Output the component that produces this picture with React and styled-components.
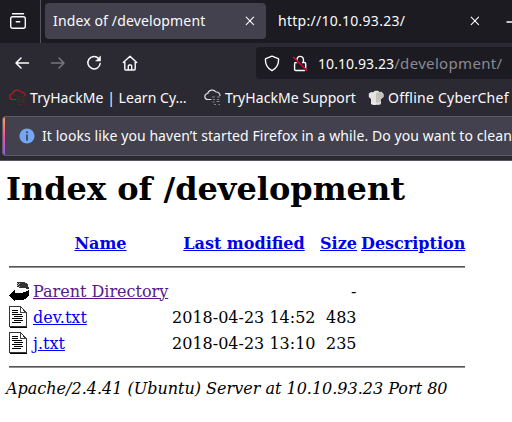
import React from "react";
import styled, { createGlobalStyle } from "styled-components";

const Global = createGlobalStyle`
  * { box-sizing: border-box; }
  html, body { margin: 0; background: #fff; overflow: hidden; }
  svg { display: block; flex: none; }
`;

const Browser = styled.div`
  width: 512px;
  height: 422px;
  overflow: hidden;
  font-family: "Noto Sans", "Open Sans", sans-serif;
  font-size: 14px;
  color: #fbfbfe;
  background: #fff;
`;

const Text = styled.span`
  white-space: pre;
  font-size: ${(p) => p.$size || 14}px;
  letter-spacing: ${(p) => p.$track || 0}px;
  color: ${(p) => p.$color || "inherit"};
  line-height: 20px;
`;

const TabStrip = styled.div`
  display: flex;
  align-items: center;
  height: 43px;
  background: #1c1b22;
`;

const ViewButton = styled.div`
  width: 41px;
  height: 43px;
  padding: 12px 0 0 9px;
  border-right: 1px solid #55545e;
  flex: none;
`;

const Tab = styled.div`
  display: flex;
  flex: none;
  align-items: center;
  justify-content: space-between;
  width: ${(p) => p.$width}px;
  height: 36px;
  margin: 0 0 1px 4px;
  padding: 0 11px 0 8px;
  border-radius: 4px;
  background: ${(p) => (p.$active ? "#42414d" : "transparent")};
`;

const NewTab = styled.div`
  margin-left: 15px;
`;

const Toolbar = styled.div`
  display: flex;
  align-items: center;
  height: 38px;
  padding-left: 14px;
  background: #2b2a33;
`;

const NavButtons = styled.div`
  display: flex;
  gap: 20px;
  width: 242px;
  padding-top: 2px;
  flex: none;
`;

const AddressBar = styled.div`
  display: flex;
  align-items: center;
  width: 270px;
  height: 32px;
  margin-top: 2px;
  padding-left: 8px;
  border-radius: 4px 0 0 4px;
  background: #1c1b22;
  flex: none;
`;

const UrlText = styled.div`
  display: flex;
  align-items: baseline;
  width: 190px;
  margin-left: 10px;
`;

const LockSlot = styled.div`
  margin-left: 12px;
`;

const Bookmarks = styled.div`
  display: flex;
  align-items: center;
  height: 35px;
  padding: 0 0 2px 9px;
  background: #2b2a33;
`;

const Bookmark = styled.div`
  display: flex;
  align-items: center;
  gap: 4px;
  width: ${(p) => p.$width}px;
  flex: none;
`;

const NoticeArea = styled.div`
  height: 45px;
  padding-left: 2px;
  border-bottom: 1px solid #55545e;
  background: #2b2a33;
`;

const Notice = styled.div`
  display: flex;
  height: 40px;
  border: 1px solid #5b5a65;
  border-width: 1px 0 1px 1px;
  border-radius: 4px 0 0 4px;
  background: #42414d;
  overflow: hidden;
  align-items: center;
`;

const Stripe = styled.div`
  width: 2px;
  height: 38px;
  background: linear-gradient(#ffa43a, #ff4aa2 50%, #9059ff);
`;

const NoticeBody = styled.div`
  display: flex;
  gap: 7px;
  align-items: center;
  padding: 0 0 0 14px;
`;

const Page = styled.main`
  height: 261px;
  padding: 9px 6px 0;
  background: #fff;
  color: #000;
  font: 16px/19px "DejaVu Serif", serif;
`;

const Heading = styled.h1`
  margin: 0;
  height: 59px;
  font-size: 32px;
  line-height: 38px;
  white-space: nowrap;
`;

const Listing = styled.table`
  border-spacing: 2px;
  border-collapse: separate;
  table-layout: fixed;
  width: 462px;
`;

const Cell = styled.td`
  height: 24px;
  padding: 1px;
  text-align: ${(p) => p.$align || "left"};
  white-space: nowrap;
`;

const DataCell = styled(Cell)`
  padding-right: 1.5px;
`;

const HeadCell = styled(Cell).attrs({ as: "th" })``;

const RuleCell = styled.td`
  padding: 1px;
`;

const Rule = styled.hr`
  margin: 8px 0;
  height: 2px;
  border: 0;
  border-top: 1px solid #555;
  background: #929292;
`;

const Link = styled.a`
  color: ${(p) => (p.$visited ? "#551a8b" : "#0000ee")};
  text-decoration: underline;
`;

const Address = styled.address`
  font-style: italic;
  white-space: nowrap;
`;

const Line = styled.svg.attrs((p) => ({
  fill: "none",
  stroke: p.stroke || "#fbfbfe",
  strokeWidth: p.strokeWidth || 1.4,
  strokeLinecap: "round",
  strokeLinejoin: "round",
}))``;

const ViewIcon = () => (
  <Line width="18" height="18" viewBox="0 0 18 18">
    <path d="M3.5 1.7h11" />
    <rect x="1.7" y="4.7" width="14.6" height="11.6" rx="2" />
    <path d="M7.3 9.7h3.4" />
  </Line>
);
const Close = () => (
  <Line width="10" height="10" viewBox="0 0 10 10" strokeWidth="1.1">
    <path d="M1.2 1.2l7.4 7.4M8.6 1.2L1.2 8.6" />
  </Line>
);
const Arrow = ({ right }) => (
  <Line width="16" height="16" viewBox="0 0 16 16" stroke={right ? "#78777f" : "#fbfbfe"} strokeWidth="1.5">
    <path d={right ? "M1.5 8H14M9 3l5 5-5 5" : "M14.5 8H2M7 3L2 8l5 5"} />
  </Line>
);
const Reload = () => (
  <Line width="16" height="16" viewBox="0 0 16 16" strokeWidth="1.5">
    <path d="M12.6 3.5A6.200 6.200 0 1 0 14.200 8.500" />
    <path d="M14.5 1.300V6H10z" fill="#fbfbfe" strokeWidth=".6" />
  </Line>
);
const Home = () => (
  <Line width="16" height="16" viewBox="0 0 16 16">
    <path d="M1.3 7.5L8 1.2l6.7 6.3M2.8 7v7q0 1 1 1h8.400q1 0 1-1V7M6.300 15v-4q0-1 1-1h1.400q1 0 1 1v4" />
  </Line>
);
const Shield = () => (
  <Line width="16" height="17" viewBox="0 0 16 17">
    <path d="M8 1.2L14.2 3.600q.4.2.4.7Q14.8 12.2 8 15.7 1.2 12.2 1.4 4.300q0-.5.4-.7z" />
  </Line>
);
const Lock = () => (
  <Line width="16" height="17" viewBox="0 0 16 17">
    <path d="M5 6V4.600a3.200 3.200 0 0 1 6.400 0V7.500M5.500 7.500H3.800q-1.200 0-1.200 1.200v5.600q0 1.200 1.200 1.200h8.700q1.200 0 1.200-1.200V8.700q0-1.200-1.200-1.200h-2" />
    <path d="M1 2.500l13.700 13" stroke="#1c1b22" strokeWidth="2.2" />
    <path d="M1.500 2.300l13.200 13" stroke="#e9002f" strokeWidth="1.4" />
  </Line>
);
const Cloud = ({ color, grey }) => (
  <Line width="17" height="17" viewBox="0 0 17 17" stroke={color} strokeWidth="1.2">
    <path d="M7 10.500H4a3 3 0 0 1-.3-6A4.700 4.700 0 0 1 12 3a3.700 3.700 0 0 1 4 3.500" />
    <path d="M8 8h3M13 8h3M9 10.500h2M13 10.500h2M8.500 13h2M12.500 12.500h3M10 15.500h2M14.500 15.500h1.500" stroke={grey} strokeLinecap="butt" />
  </Line>
);
const Chef = () => (
  <svg width="16" height="16" viewBox="0 0 16 16">
    <path d="M3 9L.8 7V3.500L3 2l2 .2L7 .7h3l1.500 1.200 2-.1L15.500 4v3L13 9v5l-3 1H5l-2-1z" fill="#e4e3df" />
    <path d="M8 3l4-1 3.500 2v3L13 9v5l-3 1H8z" fill="#c3c2bf" />
    <path d="M3 12.500l3 .7h4l3-.7" stroke="#efefed" fill="none" />
  </svg>
);
const Info = () => (
  <svg width="16" height="16" viewBox="0 0 16 16">
    <circle cx="8" cy="8" r="7.6" fill="#73a7f3" />
    <path d="M8 7v5" stroke="#42414d" strokeWidth="1.7" strokeLinecap="round" />
    <circle cx="8" cy="4.3" r="1" fill="#42414d" />
  </svg>
);
const BackIcon = () => (
  <svg width="20" height="22" viewBox="0 0 20 22" shapeRendering="crispEdges">
    <path d="M8 2h6l3 1 2 2 1 3v1h-2l-2-1h-5l-3-1z" fill="#333" />
    <path d="M8 3h1M10 3h1M9 4.500h1M8 5.500h1M10 6.500h1" stroke="#aaa" />
    <path d="M0 15l6-5v3h5l5-1 2-1 2-2v6l-2 3-3 1.500-4 .5H6v2z" fill="#000" />
  </svg>
);
const TextIcon = () => (
  <svg width="20" height="22" viewBox="0 0 20 22" shapeRendering="crispEdges">
    <path d="M1 1h11l6 6v15H1z" fill="#000" />
    <path d="M1 1h10l6 6v13H1z" fill="#fff" />
    <path d="M.5 .5H11.500l5.500 6v14H.5z" fill="none" stroke="#333" />
    <path d="M11.500 1v5.500H17" fill="none" stroke="#444" />
    <path d="M3 4.500h6M3 6.500h6M3 8.500h10M5 10.500h9M3 12.500h10M5 14.500h9M3 16.500h9" stroke="#000" />
  </svg>
);

const files = [
  { name: "Parent Directory", date: "", size: "-", visited: true, icon: <BackIcon /> },
  { name: "dev.txt", date: "2018-04-23 14:52", size: "483", icon: <TextIcon /> },
  { name: "j.txt", date: "2018-04-23 13:10", size: "235", icon: <TextIcon /> },
];

const RuleRow = () => (
  <tr><RuleCell colSpan={5}><Rule /></RuleCell></tr>
);

export default function App() {
  return (
    <Browser>
      <Global />
      <TabStrip>
        <ViewButton><ViewIcon /></ViewButton>
        <Tab $active $width={221}><Text $track={0.14}>Index of /development</Text><Close /></Tab>
        <Tab $width={221}><Text $track={0.27}>http://10.10.93.23/</Text><Close /></Tab>
        <NewTab><Line width="16" height="16" viewBox="0 0 16 16"><path d="M1 8h14M8 1v14" /></Line></NewTab>
      </TabStrip>
      <Toolbar>
        <NavButtons><Arrow /><Arrow right /><Reload /><Home /></NavButtons>
        <AddressBar>
          <Shield />
          <LockSlot><Lock /></LockSlot>
          <UrlText>
            <Text $track={0.08}>10.10.93.23</Text>
            <Text $size={15} $track={0.33} $color="#8b8a91">/development/</Text>
          </UrlText>
        </AddressBar>
      </Toolbar>
      <Bookmarks>
        <Bookmark $width={195}><Cloud color="#b51b20" grey="#7c171e" /><Text $track={0.05}>TryHackMe | Learn Cy…</Text></Bookmark>
        <Bookmark $width={164}><Cloud color="#dddde0" grey="#85858c" /><Text $track={0.08}>TryHackMe Support</Text></Bookmark>
        <Bookmark $width={150}><Chef /><Text $track={0.25}>Offline CyberChef</Text></Bookmark>
      </Bookmarks>
      <NoticeArea>
        <Notice>
          <Stripe />
          <NoticeBody><Info /><Text $track={0.08}>It looks like you haven’t started Firefox in a while. Do you want to clean</Text></NoticeBody>
        </Notice>
      </NoticeArea>
      <Page>
        <Heading>Index of /development</Heading>
        <Listing>
          <colgroup>
            <col width="22" /><col width="137" /><col width="146" /><col width="39" /><col width="106" />
          </colgroup>
          <tbody>
            <tr>
              <HeadCell />
              {["Name", "Last modified", "Size", "Description"].map((h) => (
                <HeadCell key={h} $align="center"><Link>{h}</Link></HeadCell>
              ))}
            </tr>
            <RuleRow />
            {files.map((f) => (
              <tr key={f.name}>
                <Cell>{f.icon}</Cell>
                <Cell><Link $visited={f.visited}>{f.name}</Link></Cell>
                <DataCell $align="right">{f.date}</DataCell>
                <DataCell $align="right">{f.size}</DataCell>
                <Cell />
              </tr>
            ))}
            <RuleRow />
          </tbody>
        </Listing>
        <Address>Apache/2.4.41 (Ubuntu) Server at 10.10.93.23 Port 80</Address>
      </Page>
    </Browser>
  );
}
